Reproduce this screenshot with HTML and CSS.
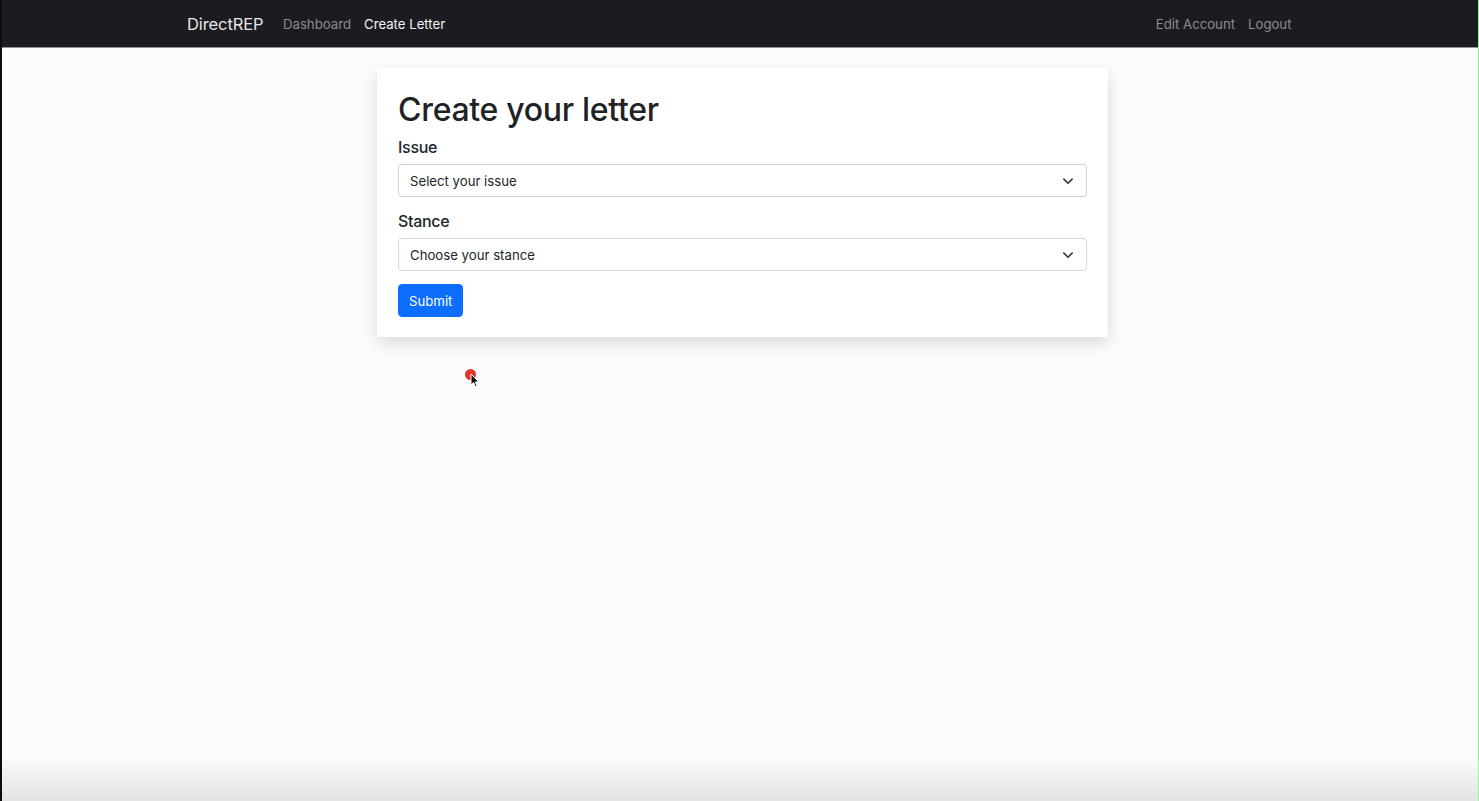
FILE: index.html
```html
<!DOCTYPE html>
<html lang="en">
<head>
<meta charset="utf-8">
<title>DirectREP - Create Letter</title>
<link rel="stylesheet" href="styles.css">
</head>
<body>
<div class="frame">
  <nav class="navbar">
    <div class="container nav-inner">
      <a class="brand" href="#">DirectREP</a>
      <ul class="nav-links">
        <li><a class="nav-link" href="#">Dashboard</a></li>
        <li><a class="nav-link active" href="#">Create Letter</a></li>
      </ul>
      <ul class="nav-links nav-right">
        <li><a class="nav-link" href="#">Edit Account</a></li>
        <li><a class="nav-link" href="#">Logout</a></li>
      </ul>
    </div>
  </nav>
  <main class="container">
    <div class="card">
      <h1 class="title">Create your letter</h1>
      <div class="field">
        <label class="label" for="issue">Issue</label>
        <div class="select issue-select" id="issue">
          <span>Select your issue</span>
          <svg class="chev" width="12" height="12" viewBox="0 0 16 16"><path d="M2.5 5.5l5.5 5.5 5.5-5.5" fill="none" stroke="#343a40" stroke-width="2.2" stroke-linecap="round" stroke-linejoin="round"/></svg>
        </div>
      </div>
      <div class="field">
        <label class="label" for="stance">Stance</label>
        <div class="select" id="stance">
          <span>Choose your stance</span>
          <svg class="chev" width="12" height="12" viewBox="0 0 16 16"><path d="M2.5 5.5l5.5 5.5 5.5-5.5" fill="none" stroke="#343a40" stroke-width="2.2" stroke-linecap="round" stroke-linejoin="round"/></svg>
        </div>
      </div>
      <button class="btn" type="button">Submit</button>
    </div>
  </main>
  <div class="cursor">
    <span class="dot"></span>
    <svg class="arrow" width="10" height="15" viewBox="0 0 10 15"><path d="M1 1 L1 12 L3.6 9.6 L5.6 14 L7.2 13.2 L5.3 9 L8.8 9 Z" fill="#111" stroke="#fff" stroke-width="1"/></svg>
  </div>
  <div class="bottom-fade"></div>
</div>
</body>
</html>
```
FILE: styles.css
```css
* { box-sizing: border-box; }
html, body { margin: 0; padding: 0; height: 100%; }
body {
  font-family: Inter, "Noto Sans", "Liberation Sans", sans-serif;
  color: #212529;
  background: #fcfcfc;
}
.frame {
  position: relative;
  height: 801px;
  overflow: hidden;
  border-left: 2px solid #0c0c0e;
  border-right: 1px solid #9af09a;
  background: #fcfcfc;
}
.container {
  width: 1140px;
  margin: 0 auto;
  padding-left: 17px;
  padding-right: 12px;
}
.navbar {
  background: #1b1c21;
  height: 48px;
  border-bottom: 1px solid #8f9094;
}
.nav-inner {
  display: flex;
  align-items: center;
  height: 47px;
}
.brand {
  color: #e6e6e8;
  text-decoration: none;
  font-size: 16.5px;
  margin-right: 13px;
  letter-spacing: -0.1px;
}
.nav-links {
  display: flex;
  list-style: none;
  margin: 0;
  padding: 0;
}
.nav-right { margin-left: auto; }
.nav-link {
  display: block;
  padding: 7px 6.5px;
  color: #8b8c90;
  text-decoration: none;
  font-size: 13.2px;
}
.nav-link.active { color: #f4f4f5; }
.card {
  width: 731px;
  margin: 20px auto 0;
  background: #fff;
  padding: 21px 21px 20px;
  box-shadow: 0 6px 16px rgba(0,0,0,0.14);
}
.title {
  margin: 0 0 3px;
  font-size: 32px;
  font-weight: 500;
  line-height: 42px;
  letter-spacing: -0.3px;
  color: #1f2225;
}
.field { margin-bottom: 11px; }
.label {
  display: block;
  font-size: 16px;
  line-height: 22px;
  padding-top: 2px;
  margin-bottom: 6px;
  font-weight: 500;
  letter-spacing: -0.3px;
}
.select {
  display: flex;
  align-items: center;
  justify-content: space-between;
  height: 33px;
  padding: 0 12px 0 11px;
  border: 1px solid #d3d6db;
  border-radius: 4px;
  background: #fff;
  font-size: 13.2px;
  color: #212529;
}
.issue-select { border-color: #c4cfdf #d0d5dc #d0d5dc; }
.chev { display: block; }
.btn {
  display: block;
  height: 33px;
  margin-top: 13px;
  padding: 0 10px;
  border: 1px solid #0d6efd;
  border-radius: 4px;
  background: #0d6efd;
  color: #fff;
  font-family: inherit;
  font-size: 13.2px;
}
.cursor {
  position: absolute;
  left: 463px;
  top: 369px;
  width: 20px;
  height: 24px;
}
.dot {
  position: absolute;
  left: 0;
  top: 0;
  width: 11px;
  height: 11px;
  border-radius: 50%;
  background: #e8322f;
}
.arrow { position: absolute; left: 5px; top: 4px; }
.bottom-fade {
  position: absolute;
  left: 0;
  right: 0;
  bottom: 0;
  height: 45px;
  background: linear-gradient(to bottom, rgba(230,230,230,0), #e3e3e3);
  pointer-events: none;
}
```
